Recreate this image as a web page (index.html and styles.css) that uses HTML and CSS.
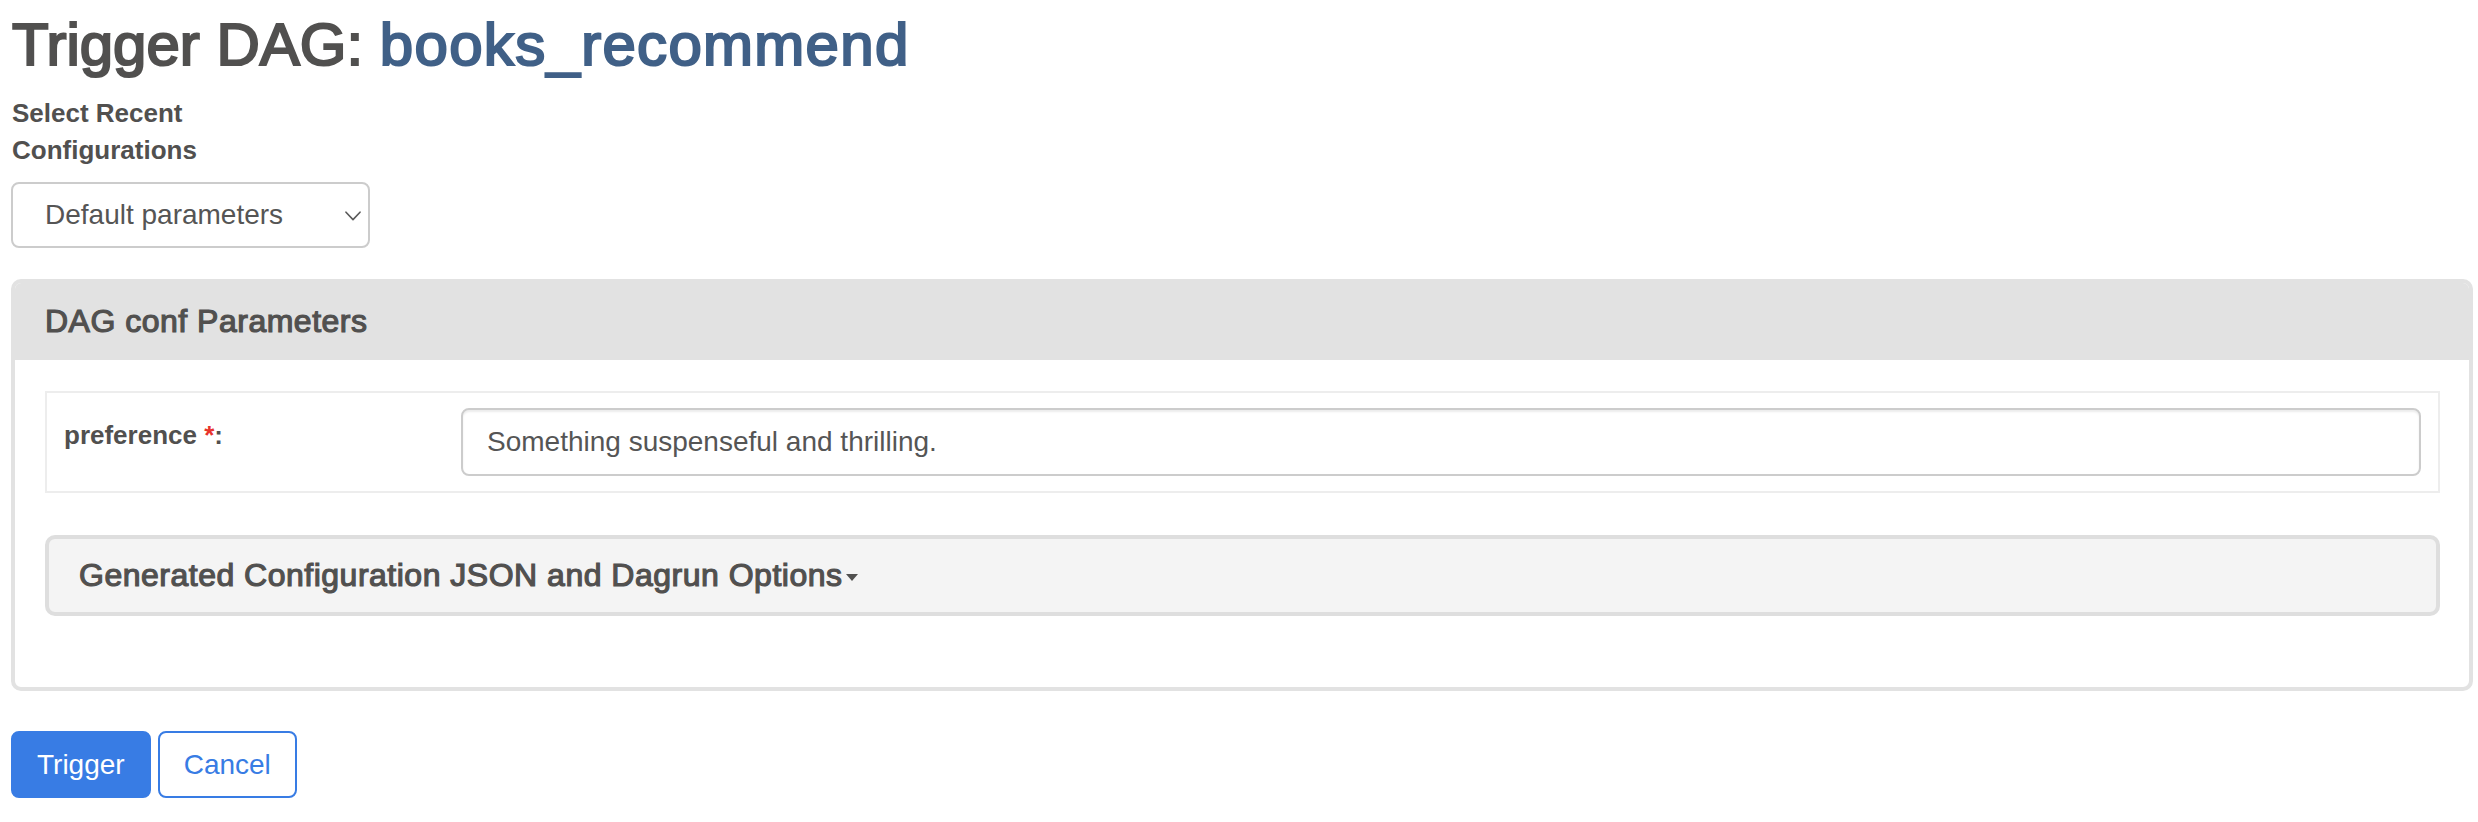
FILE: index.html
```html
<!DOCTYPE html>
<html lang="en">
<head>
<meta charset="utf-8">
<title>Trigger DAG: books_recommend</title>
<link rel="stylesheet" href="styles.css">
</head>
<body>
<main class="page">
  <h2 class="title">Trigger DAG: <span class="dag-id">books_recommend</span></h2>

  <div class="recent">
    <label class="recent-label">Select Recent Configurations</label>
    <div class="select">
      <span class="select-value">Default parameters</span>
      <svg class="chevron" width="16" height="10" viewBox="0 0 16 10" aria-hidden="true">
        <path d="M1 1.2 L8 8.6 L15 1.2" fill="none" stroke="#5a5a5a" stroke-width="1.6" stroke-linecap="round" stroke-linejoin="round"/>
      </svg>
    </div>
  </div>

  <section class="panel">
    <div class="panel-heading">
      <h4 class="panel-title">DAG conf Parameters</h4>
    </div>
    <div class="panel-body">
      <div class="params">
        <div class="param-label"><label>preference <span class="req">*</span>:</label></div>
        <div class="param-field">
          <div class="input">Something suspenseful and thrilling.</div>
        </div>
      </div>
      <div class="accordion">
        <span class="accordion-title">Generated Configuration JSON and Dagrun Options</span><span class="caret"></span>
      </div>
    </div>
  </section>

  <div class="actions">
    <button class="btn btn-primary" type="button">Trigger</button>
    <a class="btn btn-default" href="#">Cancel</a>
  </div>
</main>
</body>
</html>
```

FILE: styles.css
```css
html, body {
  margin: 0;
  padding: 0;
  background: #ffffff;
}

body {
  font-family: "Liberation Sans", Arial, Helvetica, sans-serif;
  color: #51504f;
  font-size: 28px;
  line-height: 1.42857;
}

.page {
  padding: 0 5px 0 11px;
}

.title {
  margin: 12px 0 17px 1px;
  font-size: 60px;
  line-height: 66px;
  font-weight: normal;
  color: #51504f;
  -webkit-text-stroke: 2.2px #51504f;
}

.dag-id {
  color: #406087;
  letter-spacing: 1.3px;
  -webkit-text-stroke: 2.2px #406087;
}

.recent {
  width: 359px;
  display: flex;
  flex-direction: column;
}

.recent-label {
  display: block;
  max-width: 300px;
  font-size: 26px;
  line-height: 37px;
  font-weight: bold;
  margin: 0 0 13px 1px;
  color: #51504f;
}

.select {
  box-sizing: border-box;
  width: 359px;
  height: 66px;
  border: 2px solid #cccccc;
  border-radius: 8px;
  background: #ffffff;
  display: flex;
  align-items: center;
  justify-content: space-between;
  padding: 0 7px 0 32px;
  color: #555555;
  font-size: 28px;
}

.chevron {
  display: block;
  margin-top: 2px;
}

.panel {
  margin-top: 31px;
  border: 4px solid #e2e2e2;
  border-radius: 10px;
  background: #ffffff;
}

.panel-heading {
  background: #e2e2e2;
  padding: 20px 30px 21px 30px;
  border-radius: 6px 6px 0 0;
}

.panel-title {
  margin: 0;
  font-size: 32px;
  line-height: 36px;
  font-weight: normal;
  letter-spacing: 0.5px;
  color: #51504f;
  -webkit-text-stroke: 1.2px #51504f;
}

.panel-body {
  padding: 31px 29px 30px 30px;
}

.params {
  display: grid;
  grid-template-columns: 398px 1fr;
  border: 2px solid #ededed;
}

.param-label {
  padding: 15px 16px 15px 17px;
}

.param-label label {
  display: block;
  padding-top: 9px;
  font-size: 26px;
  line-height: 37px;
  font-weight: bold;
  color: #51504f;
}

.req {
  color: #e8332b;
}

.param-field {
  padding: 15px 17px 15px 16px;
}

.input {
  box-sizing: border-box;
  height: 68px;
  border: 2px solid #cccccc;
  border-radius: 8px;
  box-shadow: inset 0 2px 2px rgba(0, 0, 0, 0.075);
  padding: 0 24px;
  display: flex;
  align-items: center;
  font-size: 28px;
  color: #555555;
  background: #ffffff;
}

.accordion {
  margin: 42px 0 41px 0;
  background: #f4f4f4;
  border: 4px solid #dedede;
  border-radius: 10px;
  padding: 20px 30px;
  display: flex;
  align-items: center;
}

.accordion-title {
  font-size: 32px;
  line-height: 33px;
  letter-spacing: 0.5px;
  color: #51504f;
  -webkit-text-stroke: 1.2px #51504f;
}

.caret {
  display: inline-block;
  width: 0;
  height: 0;
  margin-left: 4px;
  margin-top: 4px;
  border-top: 7px solid #51504f;
  border-left: 6px solid transparent;
  border-right: 6px solid transparent;
}

.actions {
  margin-top: 40px;
  display: flex;
  gap: 7px;
}

.btn {
  box-sizing: border-box;
  height: 67px;
  padding: 0 24px;
  border: 2px solid transparent;
  border-radius: 8px;
  font-family: "Liberation Sans", Arial, Helvetica, sans-serif;
  font-size: 28px;
  line-height: 1;
  display: inline-flex;
  align-items: center;
  text-decoration: none;
  cursor: pointer;
}

.btn-primary {
  background: #387ce4;
  border-color: #387ce4;
  color: #ffffff;
}

.btn-default {
  background: #ffffff;
  border-color: #387ce4;
  color: #387ce4;
}
```
